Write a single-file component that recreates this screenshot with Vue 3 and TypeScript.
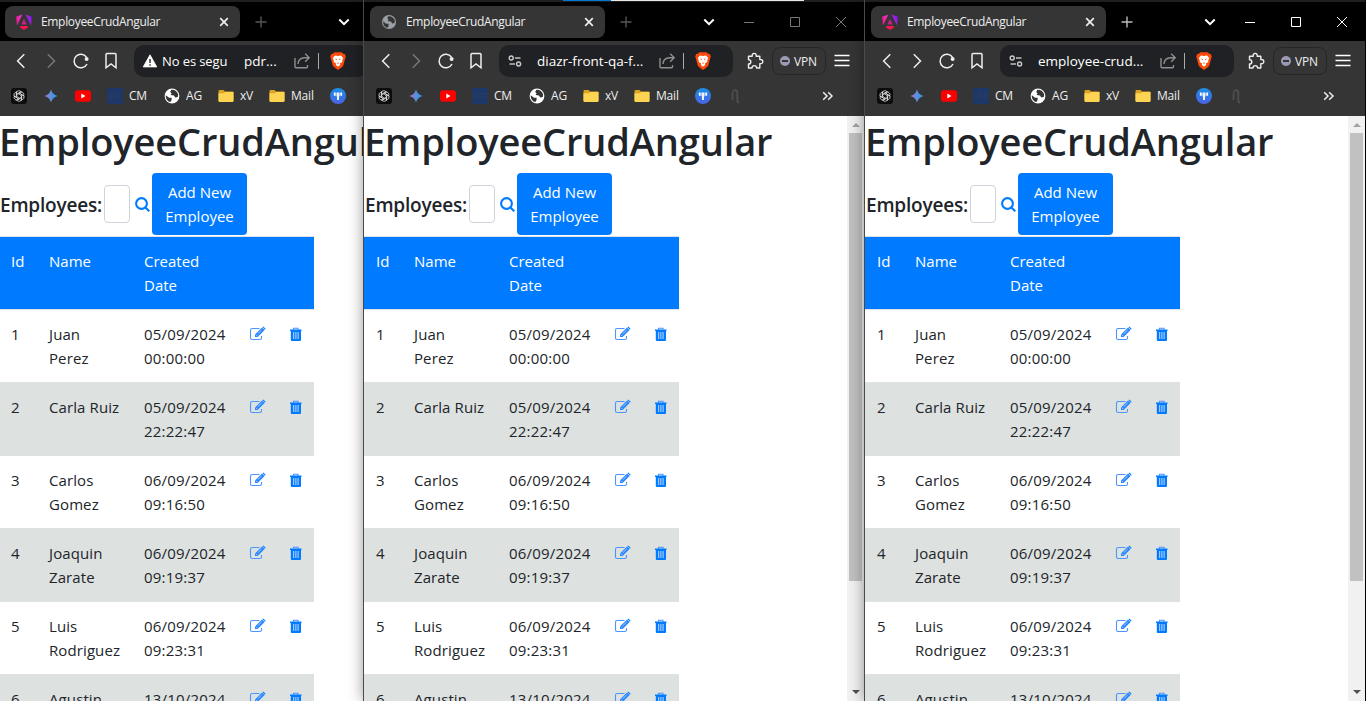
<script setup lang="ts">
interface BrowserWindow {
  id: string
  angular: boolean
  active: boolean
  insecure: boolean
  canForward: boolean
  url: string
}

interface Employee {
  id: number
  name: string[]
  date: string
  time: string
}

const windows: BrowserWindow[] = [
  { id: 'w1', angular: true, active: false, insecure: true, canForward: false, url: 'pdr...' },
  { id: 'w2', angular: false, active: false, insecure: false, canForward: false, url: 'diazr-front-qa-f...' },
  { id: 'w3', angular: true, active: true, insecure: false, canForward: true, url: 'employee-crud...' },
]

const employees: Employee[] = [
  { id: 1, name: ['Juan', 'Perez'], date: '05/09/2024', time: '00:00:00' },
  { id: 2, name: ['Carla Ruiz'], date: '05/09/2024', time: '22:22:47' },
  { id: 3, name: ['Carlos', 'Gomez'], date: '06/09/2024', time: '09:16:50' },
  { id: 4, name: ['Joaquin', 'Zarate'], date: '06/09/2024', time: '09:19:37' },
  { id: 5, name: ['Luis', 'Rodriguez'], date: '06/09/2024', time: '09:23:31' },
  { id: 6, name: ['Agustin'], date: '13/10/2024', time: '' },
]
</script>

<template>
  <div class="desktop">
    <div class="taskline"></div>
    <section v-for="w in windows" :key="w.id" class="window" :class="[w.id, { active: w.active }]">
      <header class="tabstrip">
        <div class="tab">
          <svg v-if="w.angular" class="fav" viewBox="0 0 16 16">
            <defs>
              <linearGradient :id="'ng' + w.id" gradientUnits="userSpaceOnUse" x1="0" y1="9" x2="16" y2="4">
                <stop offset="0" stop-color="#f5188a" />
                <stop offset="0.4" stop-color="#ee2bc4" />
                <stop offset="1" stop-color="#7a17f5" />
              </linearGradient>
            </defs>
            <g :fill="`url(#ng${w.id})`">
              <path d="M6.4 0.4 0.2 2.8 1 11.4z" />
              <path d="M9.6 0.4 15.8 2.8 15 11.4z" />
            </g>
            <path d="M8 4.7 10.6 10.6H5.4z" fill="#c8208e" />
            <path d="M4.4 12 11.6 12 12 13.5 8 16 4 13.5z" fill="#f5174f" />
          </svg>
          <svg v-else class="fav" viewBox="0 0 16 16">
            <circle cx="8" cy="8" r="7" fill="#9aa0a6" />
            <path d="M2.2 7.2 5 9.8 7.6 9.8 7.6 12 6.4 13.8C3.6 13.2 1.9 10.4 2.2 7.2zM7.4 2.2 6.2 4 7.6 5.6 6.6 7 10 7.4 11.2 9.4 13.6 9 13.8 6.6C13 3.6 10.2 1.8 7.4 2.2z" fill="#353535" />
          </svg>
          <span class="tabtitle">EmployeeCrudAngular</span>
          <svg class="tabclose" viewBox="0 0 10 10"><path d="M1.2 1.2 8.8 8.8M8.8 1.2 1.2 8.8" stroke="#eee" stroke-width="1.7" /></svg>
        </div>
        <svg class="plus" viewBox="0 0 12 12"><path d="M6 0.5V11.5M0.5 6H11.5" /></svg>
        <svg class="tabmenu" viewBox="0 0 12 8"><path d="M1.3 1.5 6 6.2 10.7 1.5" /></svg>
        <div class="controls">
          <svg viewBox="0 0 12 12"><path d="M1 6.5H11" /></svg>
          <svg viewBox="0 0 12 12"><path d="M1.5 1.5H10.5V10.5H1.5z" /></svg>
          <svg viewBox="0 0 12 12"><path d="M1 1 11 11M11 1 1 11" /></svg>
        </div>
      </header>

      <div class="toolbar">
        <span class="nav"><svg viewBox="0 0 18 18"><path d="M12.3 2.2 5.6 9 12.3 15.8" /></svg></span>
        <span class="nav" :class="{ off: !w.canForward }"><svg viewBox="0 0 18 18"><path d="M5.8 2.2 12.5 9 5.8 15.8" /></svg></span>
        <span class="nav">
          <svg viewBox="0 0 18 18"><path d="M15 12A6.8 6.8 0 1 1 14.4 5" /><circle cx="14.6" cy="7" r="2" fill="#eee" stroke="none" /></svg>
        </span>
        <span class="nav"><svg viewBox="0 0 18 18"><path d="M4 2.6Q4 1.6 5 1.6H13Q14 1.6 14 2.6V15.8L9 12 4 15.8z" /></svg></span>
        <div class="address">
          <svg v-if="w.insecure" class="siteicon" viewBox="0 0 16 16">
            <path d="M8 1.8 14.8 13.9H1.2z" fill="#fff" stroke="#fff" stroke-width="0.8" stroke-linejoin="round" />
            <path d="M8 6V10M8 11.3V12.8" stroke="#222326" stroke-width="1.4" />
          </svg>
          <svg v-else class="siteicon" viewBox="0 0 16 16">
            <g fill="none" stroke="#ccc" stroke-width="1.4">
              <circle cx="4.2" cy="5" r="2" /><path d="M8 5H13.5" />
              <circle cx="11.6" cy="11" r="2" /><path d="M2.5 11H8" />
            </g>
          </svg>
          <span v-if="w.insecure" class="warn">No es segu</span>
          <span class="url">{{ w.url }}</span>
          <svg class="share" viewBox="0 0 18 18">
            <path d="M2 6V14.8Q2 15.8 3 15.8H13.5Q14.5 15.8 14.5 14.8V13M5 12Q5.2 6.2 11.6 5.8H15.5M12.2 1.8 16.2 5.8 12.2 9.8" />
          </svg>
          <span class="sep"></span>
          <svg class="brave" viewBox="0 0 16 18">
            <path d="M4.4 0.2H11.6L13.1 1.8 14.8 2 15.8 4.4 15.2 6.2 13.3 13.6Q12.8 15 8 18 3.2 15 2.7 13.6L0.8 6.2 0.2 4.4 1.2 2 2.9 1.8z" fill="#fb4a0a" />
            <path d="M5 3.4 8 4 11 3.4 13.2 6 12.2 8.6 12.3 10 9.9 11.6 10.2 13 8 14.8 5.8 13 6.1 11.6 3.7 10 3.8 8.6 2.8 6z" fill="#fff" />
            <path d="M4.8 6.4 7 7 6.6 8.2zM11.2 6.4 9 7 9.4 8.2zM6.8 10.8H9.2L8 12z" fill="#fb4a0a" />
          </svg>
        </div>
        <svg class="puzzle" viewBox="0 0 18 18">
          <path d="M2.5 4.2H6.2Q5.9 1.4 8.2 1.4 10.5 1.4 10.2 4.2H13.8V7.6Q16.8 7.3 16.8 9.6 16.8 11.9 13.8 11.6V16H10.6Q10.6 13.6 8.3 13.6 6 13.6 6 16H2.5V12Q4.8 12 4.8 9.9 4.8 7.8 2.5 7.8z" />
        </svg>
        <span class="vpn"><i></i><b>VPN</b></span>
        <svg class="menu" viewBox="0 0 16 14"><path d="M0.5 1.5H15.5M0.5 6.5H15.5M0.5 11.5H15.5" /></svg>
      </div>

      <nav class="bookmarks">
        <span class="bm">
          <svg viewBox="0 0 16 16">
            <rect width="16" height="16" rx="3" fill="#0c0c0c" />
            <g fill="none" stroke="#e0e0e0" stroke-width="0.8">
              <path v-for="a in [0, 60, 120, 180, 240, 300]" :key="a" d="M5.4 9.4V5.2Q5.4 2.7 7.8 2.7 9.4 2.7 10.2 4M6.9 7.2V5.6L10.6 3.6" :transform="`rotate(${a} 8 8)`" />
            </g>
          </svg>
        </span>
        <span class="bm">
          <svg viewBox="0 0 16 16">
            <defs>
              <linearGradient :id="'gem' + w.id" x1="0" x2="1"><stop offset="0.1" stop-color="#9a76c8" /><stop offset="0.5" stop-color="#5a8fe0" /><stop offset="0.9" stop-color="#2f9be0" /></linearGradient>
            </defs>
            <path d="M8 1.5Q9.4 6.6 14.5 8 9.4 9.4 8 14.5 6.6 9.4 1.5 8 6.6 6.6 8 1.5z" :fill="`url(#gem${w.id})`" />
          </svg>
        </span>
        <span class="bm">
          <svg viewBox="0 0 16 16"><rect y="2.2" width="16" height="11.6" rx="3" fill="#f00" /><path d="M6.3 5.6 10.5 8 6.3 10.4z" fill="#fff" /></svg>
        </span>
        <span class="bm cm"><i class="ucc">UCC</i><b>CM</b></span>
        <span class="bm ag">
          <svg viewBox="0 0 16 16">
            <circle cx="8" cy="8" r="7.4" fill="#fff" />
            <path d="M1.8 7.2 5 9.8 7.6 9.8 7.6 12 6.4 14C3.4 13.4 1.5 10.4 1.8 7.2zM7.4 1.8 6.2 4 7.6 5.6 6.6 7 10 7.4 11.2 9.4 13.8 9 14.2 6.6C13.2 3.2 10.2 1.4 7.4 1.8z" fill="#353535" />
          </svg><b>AG</b>
        </span>
        <span class="bm xv">
          <svg viewBox="0 0 16 16"><path d="M0.5 3Q0.5 2 1.5 2H5.5L7 3.6H14.5Q15.5 3.6 15.5 4.6V13H0.5z" fill="#dda322" /><path d="M0.5 5.2H6L7.2 4H15.5V13Q15.5 14 14.5 14H1.5Q0.5 14 0.5 13z" fill="#fdd354" /></svg><b>xV</b>
        </span>
        <span class="bm mail">
          <svg viewBox="0 0 16 16"><path d="M0.5 3Q0.5 2 1.5 2H5.5L7 3.6H14.5Q15.5 3.6 15.5 4.6V13H0.5z" fill="#dda322" /><path d="M0.5 5.2H6L7.2 4H15.5V13Q15.5 14 14.5 14H1.5Q0.5 14 0.5 13z" fill="#fdd354" /></svg><b>Mail</b>
        </span>
        <span class="bm">
          <svg viewBox="0 0 16 16">
            <defs><linearGradient :id="'bl' + w.id" x1="0" y1="0" x2="0" y2="1"><stop offset="0" stop-color="#1a8fe6" /><stop offset="1" stop-color="#4a63e6" /></linearGradient></defs>
            <circle cx="8" cy="8" r="8" :fill="`url(#bl${w.id})`" />
            <path d="M4.8 4.6V7.8M8 4.6V12M11.2 4.6V7.8" stroke="#fff" stroke-width="1.8" />
            <path d="M6.4 4.6V8.4M9.6 4.6V8.4" stroke="#bcd8fb" stroke-width="0.8" />
          </svg>
        </span>
        <span class="bm last">
          <svg viewBox="0 0 16 16"><path d="M5.5 12V4.5M5.5 3.5Q10 0.6 10.3 4.5V13.5L12 15" fill="none" stroke="#4e4e4e" stroke-width="1.9" /></svg>
        </span>
        <svg class="more" viewBox="0 0 12 10"><path d="M1.2 1.2 5 5 1.2 8.8M6.2 1.2 10 5 6.2 8.8" /></svg>
      </nav>

      <main class="page">
        <div class="content">
          <h1>EmployeeCrudAngular</h1>
          <div class="search">
            <span class="label">Employees:</span>
            <input type="text" />
            <svg class="glass" viewBox="0 0 15 15"><circle cx="6.5" cy="6.5" r="5.4" /><path d="M10.4 10.4 14.3 14.3" /></svg>
            <button type="button"><span>Add New</span><span>Employee</span></button>
          </div>
          <div class="row head">
            <div>Id</div>
            <div>Name</div>
            <div class="created"><span>Created</span><span>Date</span></div>
            <div></div>
            <div></div>
          </div>
          <div v-for="e in employees" :key="e.id" class="row" :class="{ striped: e.id % 2 === 0 }">
            <div>{{ e.id }}</div>
            <div class="name"><span v-for="n in e.name" :key="n">{{ n }}</span></div>
            <div class="date"><span>{{ e.date }}</span><span>{{ e.time }}</span></div>
            <div>
              <svg class="edit" viewBox="0 0 17 16">
                <path d="M10.5 2.5H3.2Q1.5 2.5 1.5 4.2V12Q1.5 13.5 3.2 13.5H10.8Q12.5 13.5 12.5 12V10" fill="none" stroke="#4a95ff" stroke-width="1.1" />
                <path d="M6 11V8.4L13 1.5 15.6 4.1 8.6 11z" fill="#2a86ff" />
                <path d="M13.5 1.2 14.3 0.6 16.6 2.8 16 3.7z" fill="#007bff" />
                <path d="M7 8.8 8.3 10.1M8.7 7.8 12.6 4" stroke="#d5e5ff" stroke-width="0.7" />
              </svg>
            </div>
            <div>
              <svg class="trash" viewBox="0 0 13 15">
                <path d="M4.5 2.8V1.3H9V2.8" fill="none" stroke="#4b93ff" stroke-width="1.1" />
                <path d="M1 2.5H12.5V4H12V13Q12 14 11 14H2.8Q1.8 14 1.8 13V4H1z" fill="#007bff" />
                <path d="M4.7 5V12M6.9 5V12M9.1 5V12" stroke="#c3d9fb" stroke-width="1" />
              </svg>
            </div>
          </div>
        </div>
        <div class="scrollbar">
          <svg class="up" viewBox="0 0 8 4"><path d="M0 4 4 0 8 4z" /></svg>
          <div class="thumb"></div>
          <svg class="down" viewBox="0 0 8 4"><path d="M0 0H8L4 4z" /></svg>
        </div>
      </main>
    </section>
  </div>
</template>

<style>
html,
body {
  overflow: hidden;
}
</style>

<style scoped>
* {
  box-sizing: border-box;
}
.desktop {
  position: relative;
  width: 1366px;
  height: 701px;
  overflow: hidden;
  background: #000;
  font-family: "Open Sans", "Noto Sans", sans-serif;
}
.taskline {
  position: absolute;
  z-index: 5;
  left: 563px;
  top: 0;
  width: 241px;
  height: 1px;
  background: linear-gradient(90deg, #0078d7 48px, #e8e8e8 48px);
}
.window {
  position: absolute;
  top: 0;
  height: 701px;
  width: 501px;
  display: flex;
  flex-direction: column;
  background: #353535;
  box-shadow: -1px 0 0 #4a4a4a, -1px 0 14px rgba(0, 0, 0, 0.4);
}
.w1 { left: -1px; box-shadow: none; }
.w2 { left: 364px; }
.w3 { left: 865px; width: 500px; }
.tabstrip {
  flex: none;
  display: flex;
  align-items: center;
  height: 41px;
  padding-left: 6px;
  background: #000;
  border-top: 2px solid #1f1f1f;
}
.tab {
  display: flex;
  align-items: center;
  width: 235px;
  height: 32px;
  padding-left: 11px;
  border-radius: 8px;
  background: #353535;
  color: #eee;
}
.fav { width: 16px; height: 16px; }
.tabtitle {
  width: 177px;
  margin-left: 9px;
  font-size: 12px;
  letter-spacing: -0.33px;
}
.tabclose { width: 10px; height: 10px; margin-left: 1px; }
.plus { width: 12px; height: 12px; margin-left: 15px; }
.plus path { stroke: #555; stroke-width: 1.4; }
.active .plus path { stroke: #bbb; }
.tabmenu { width: 12px; height: 8px; margin-left: 71px; }
.tabmenu path { fill: none; stroke: #fff; stroke-width: 2; }
.controls { display: flex; gap: 34px; margin-left: 28px; }
.controls svg { width: 12px; height: 12px; }
.controls path { fill: none; stroke: #777; stroke-width: 1; }
.active .controls path { stroke: #fff; }
.toolbar {
  flex: none;
  display: flex;
  align-items: center;
  height: 40px;
  padding-left: 7px;
}
.nav {
  display: flex;
  justify-content: center;
  width: 30px;
}
.nav svg { width: 18px; height: 18px; }
.nav path { fill: none; stroke: #eee; stroke-width: 1.5; }
.nav.off path { stroke: #777; }
.address {
  display: flex;
  align-items: center;
  width: 234px;
  height: 32px;
  margin-left: 8px;
  padding-left: 8px;
  border-radius: 10px;
  background: #202124;
  color: #fff;
  font-size: 13px;
}
.siteicon { flex: none; width: 16px; height: 16px; }
.warn {
  flex: none;
  width: 66px;
  margin: 0 16px 0 4px;
  white-space: nowrap;
  letter-spacing: -0.1px;
}
.url {
  flex: none;
  width: 113px;
  margin-left: 14px;
  white-space: nowrap;
  font-size: 13.5px;
  letter-spacing: 0;
}
.warn + .url { width: 41px; margin-left: 0; }
.share { flex: none; width: 18px; height: 18px; margin-left: 8px; }
.share path { fill: none; stroke: #8f8f8f; stroke-width: 1.4; }
.sep { flex: none; width: 1px; height: 16px; margin: 0 11px 0 7px; background: #aaa; }
.brave { flex: none; width: 16px; height: 18px; }
.puzzle { width: 18px; height: 18px; margin-left: 13px; }
.puzzle path { fill: none; stroke: #eee; stroke-width: 1.4; stroke-linejoin: round; }
.vpn {
  display: flex;
  align-items: center;
  width: 54px;
  height: 28px;
  margin-left: 8px;
  padding-left: 7px;
  border: 1px solid #262626;
  border-radius: 8px;
  color: #eee;
  font-size: 12px;
}
.vpn i {
  display: flex;
  align-items: center;
  justify-content: center;
  width: 10px;
  height: 10px;
  border-radius: 50%;
  background: #9a9ab4;
}
.vpn i::after { content: ""; width: 6px; height: 1.5px; background: #353535; }
.vpn b { margin-left: 4px; font-weight: 400; letter-spacing: -0.2px; }
.menu { width: 16px; height: 14px; margin-left: 8px; }
.menu path { stroke: #fff; stroke-width: 1.4; }
.bookmarks {
  flex: none;
  display: flex;
  align-items: center;
  gap: 16px;
  height: 30px;
  margin-bottom: 5px;
  padding-left: 12px;
  color: #eee;
  font-size: 12px;
}
.bm { display: flex; align-items: center; gap: 6px; width: 16px; white-space: nowrap; }
.bm svg { flex: none; width: 16px; height: 16px; }
.bm b { font-weight: 400; letter-spacing: -0.2px; margin-top: -2px; }
.bm.cm { width: 41px; }
.bm.ag { width: 38px; }
.bm.xv { width: 35px; }
.bm.mail { width: 45px; }
.ucc {
  width: 16px;
  height: 16px;
  background: #1d3769;
  color: #34405a;
  font: 400 7px/16px "Liberation Sans", sans-serif;
  text-align: center;
}
.more { width: 12px; height: 10px; margin-left: 63px; }
.more path { fill: none; stroke: #eee; stroke-width: 1.5; }
.page {
  flex: 1;
  display: flex;
  min-height: 0;
  overflow: hidden;
  background: #fff;
  color: #212529;
}
.content { flex: none; width: 483px; }
h1 {
  height: 49px;
  margin: 0 0 8px;
  font-size: 38px;
  font-weight: 600;
  line-height: 51px;
  letter-spacing: -0.13px;
}
.search {
  display: flex;
  align-items: center;
  height: 62px;
  margin-bottom: 1px;
  padding-left: 1px;
}
.label {
  width: 104px;
  padding-top: 2px;
  font-size: 19px;
  font-weight: 600;
  letter-spacing: -0.2px;
}
.search input {
  width: 26px;
  height: 38px;
  padding: 0;
  border: 1px solid #ced4da;
  border-radius: 4px;
}
.glass { width: 15px; height: 15px; margin: 0 2px 0 5px; }
.glass circle,
.glass path { fill: none; stroke: #007bff; stroke-width: 2.1; }
.search button {
  display: flex;
  flex-direction: column;
  align-items: center;
  width: 95px;
  height: 62px;
  padding: 7px 0;
  border: 0;
  border-radius: 4px;
  background: #007bff;
  color: #fff;
  font: 15px/24px "Open Sans", sans-serif;
}
.row {
  display: grid;
  grid-template-columns: 38px 95px 105px 40px 37px;
  width: 315px;
  height: 73px;
  border-top: 1px solid #dee2e6;
  font-size: 15px;
  line-height: 24px;
}
.row > div {
  display: flex;
  flex-direction: column;
  padding: 12px 0 0 12px;
  white-space: nowrap;
}
.row > .name { letter-spacing: 0.1px; }
.row > .date { letter-spacing: 0.2px; }
.row.head { background: #007bff; color: #fff; background-clip: padding-box; }
.row.striped { background: #dde1e0; }
.edit { width: 17px; height: 16px; margin-top: 4px; }
.trash { width: 13px; height: 15px; margin-top: 5px; }
.scrollbar {
  flex: none;
  display: flex;
  flex-direction: column;
  width: 17px;
  background: #f1f1f1;
}
.up { width: 8px; height: 4px; margin: 7px 0 6px 5px; fill: #a3a3a3; }
.thumb { width: 13px; height: 448px; margin-left: 2px; background: #c1c1c1; }
.down { width: 8px; height: 4px; margin: 109px 0 0 5px; fill: #505050; }
</style>
